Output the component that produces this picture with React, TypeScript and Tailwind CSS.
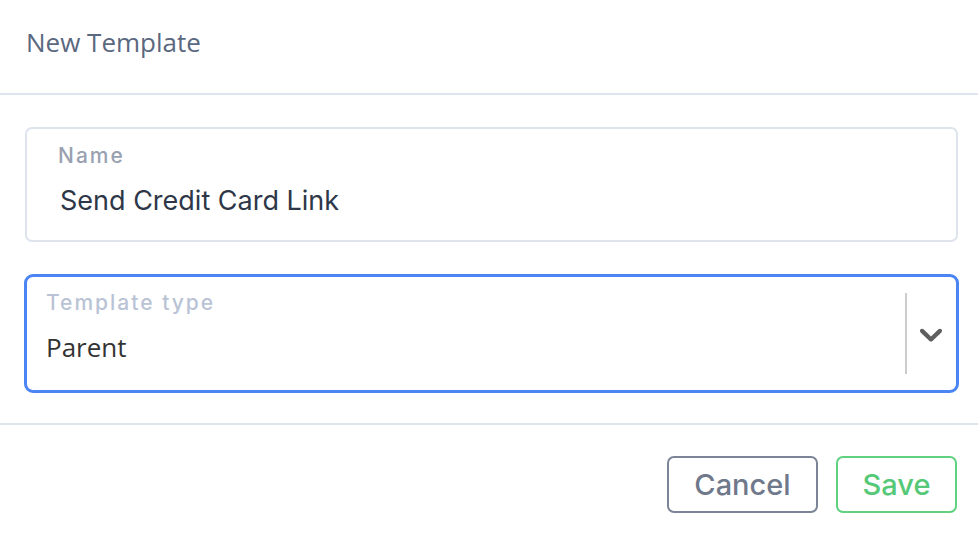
import React from "react";

const poppins = { fontFamily: "Inter, 'Noto Sans', sans-serif" };

export default function App() {
  return (
    <div className="w-[978px] h-[534px] bg-white overflow-hidden flex flex-col">
      {/* header */}
      <div className="h-[95px] flex items-center px-[26px] border-b-2 border-[#dde5ee]">
        <h1 className="text-[26px] leading-[32px] text-[#5a6880] font-['Open_Sans',sans-serif] -mt-[10px]">New Template</h1>
      </div>

      {/* body */}
      <div className="pl-[24px] pr-[19px] pt-[32px] pb-[30px] flex flex-col gap-[32px] border-b-2 border-[#dde5ee]">
        <div className="mx-[1px] h-[115px] border-2 border-[#dde4ee] rounded-[7px] pl-[31px] pt-[15px]" style={poppins}>
          <div className="text-[21px] tracking-[2px] font-medium text-[#99a1b1] leading-[24px]">Name</div>
          <div className="text-[27px] text-[#2e3748] leading-[32px] mt-[17px] pl-[2px]">Send Credit Card Link</div>
        </div>

        <div className="h-[119px] border-[3px] border-[#4a85f3] rounded-[9px] flex">
          <div className="flex-1 pl-[19px] pt-[14px]">
            <div className="text-[21px] tracking-[2px] font-medium text-[#b9c3d5] leading-[24px]" style={poppins}>Template type</div>
            <div className="text-[26px] text-[#333333] leading-[32px] mt-[16px] font-['Open_Sans',sans-serif]">Parent</div>
          </div>
          <div className="flex items-center py-[16px]">
            <div className="w-[2px] self-stretch bg-[#cccccc]" />
            <div className="pl-[5px] pr-[6px] flex items-center">
              <svg width="38" height="38" viewBox="0 0 20 20" fill="#5f5f5f">
                <path d="M4.516 7.548c0.436-0.446 1.043-0.481 1.576 0l3.908 3.747 3.908-3.747c0.533-0.481 1.141-0.446 1.574 0 0.436 0.445 0.408 1.197 0 1.615-0.406 0.418-4.695 4.502-4.695 4.502-0.217 0.223-0.502 0.335-0.787 0.335s-0.57-0.112-0.789-0.335c0 0-4.287-4.084-4.695-4.502s-0.436-1.17 0-1.615z" />
              </svg>
            </div>
          </div>
        </div>
      </div>

      {/* footer */}
      <div className="flex justify-end gap-[18px] pt-[31px] pr-[21px]" style={poppins}>
        <button className="w-[151px] h-[57px] border-2 border-[#7b8597] rounded-[7px] text-[29px] font-medium text-[#6f798b]">
          Cancel
        </button>
        <button className="w-[121px] h-[57px] border-2 border-[#5fd17f] rounded-[7px] text-[29px] font-medium text-[#55c977]">
          Save
        </button>
      </div>
    </div>
  );
}
